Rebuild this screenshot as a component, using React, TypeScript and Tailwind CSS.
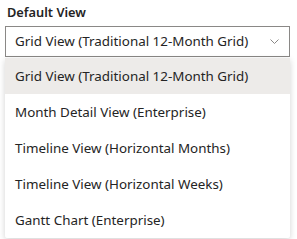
const OPTIONS = [
  "Grid View (Traditional 12-Month Grid)",
  "Month Detail View (Enterprise)",
  "Timeline View (Horizontal Months)",
  "Timeline View (Horizontal Weeks)",
  "Gantt Chart (Enterprise)",
];

export default function App() {
  const selected = OPTIONS[0];
  return (
    <div className="w-[297px] h-[239px] bg-white overflow-hidden text-[#242424]" style={{ fontFamily: '"Noto Sans", sans-serif' }}>
      <div className="pl-[7px] pt-[3px] h-[26px] text-[12.8px] font-semibold leading-[18px]">Default View</div>
      <div className="ml-[5px] w-[285px] h-[31px] border border-[#8a8886] bg-white flex items-center justify-between pl-[9px] pr-[10px] text-[13.4px]">
        <span>{selected}</span>
        <svg width="9" height="5" viewBox="0 0 9 5" fill="none">
          <path d="M0.5 0.5L4.5 4.5L8.5 0.5" stroke="#8a8886" strokeWidth="1" />
        </svg>
      </div>
      <ul className="mt-[1px] ml-[5px] w-[285px] bg-white shadow-[0_2px_6px_rgba(0,0,0,0.18)] rounded-b-[2px]">
        {OPTIONS.map((o) => (
          <li
            key={o}
            className={`h-[36px] flex items-center pl-[10px] text-[13.4px] ${o === selected ? "bg-[#edebe9]" : ""}`}
          >
            {o}
          </li>
        ))}
      </ul>
    </div>
  );
}
